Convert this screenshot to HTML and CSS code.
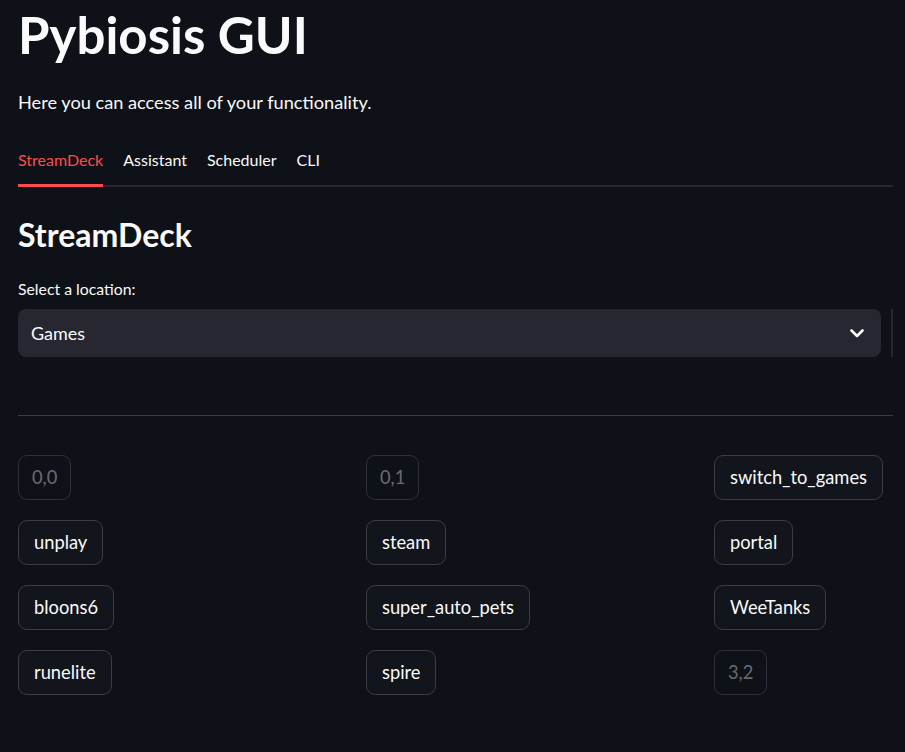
FILE: index.html
```html
<!DOCTYPE html>
<html>
<head>
<meta charset="utf-8">
<link rel="stylesheet" href="styles.css">
</head>
<body>
<div class="main">
  <h1 class="title">Pybiosis GUI</h1>
  <p class="intro">Here you can access all of your functionality.</p>
  <div class="tabs">
    <div class="tab active">StreamDeck</div>
    <div class="tab">Assistant</div>
    <div class="tab">Scheduler</div>
    <div class="tab">CLI</div>
  </div>
  <h2 class="section">StreamDeck</h2>
  <div class="label">Select a location:</div>
  <div class="select-row">
    <div class="select">
      <span class="select-value">Games</span>
      <svg class="chev" width="14" height="9" viewBox="0 0 14 9"><path d="M1.5 1.5 L7 7 L12.5 1.5" fill="none" stroke="#fafafa" stroke-width="2.6" stroke-linecap="round" stroke-linejoin="round"/></svg>
    </div>
    <div class="vbar"></div>
  </div>
  <hr class="divider">
  <div class="grid">
    <div class="cell"><button class="btn disabled">0,0</button></div>
    <div class="cell"><button class="btn disabled">0,1</button></div>
    <div class="cell"><button class="btn">switch_to_games</button></div>
    <div class="cell"><button class="btn">unplay</button></div>
    <div class="cell"><button class="btn">steam</button></div>
    <div class="cell"><button class="btn">portal</button></div>
    <div class="cell"><button class="btn">bloons6</button></div>
    <div class="cell"><button class="btn">super_auto_pets</button></div>
    <div class="cell"><button class="btn">WeeTanks</button></div>
    <div class="cell"><button class="btn">runelite</button></div>
    <div class="cell"><button class="btn">spire</button></div>
    <div class="cell"><button class="btn disabled">3,2</button></div>
  </div>
</div>
</body>
</html>
```

FILE: styles.css
```css
html, body {
  margin: 0;
  padding: 0;
  background: #0e1117;
  color: #fafafa;
  font-family: Lato, "Noto Sans", sans-serif;
  overflow: hidden;
}
.main {
  width: 875px;
  padding: 0 12px 0 18px;
}
.title {
  margin: 5px 0 0 0;
  font-size: 51px;
  line-height: 60px;
  font-weight: 700;
}
.intro {
  margin: 25px 0 0 0;
  font-size: 18.2px;
  line-height: 24px;
}
.tabs {
  display: flex;
  gap: 20px;
  margin-top: 26px;
  border-bottom: 2px solid #262730;
  height: 47px;
  box-sizing: border-box;
}
.tab {
  font-size: 16px;
  line-height: 24px;
  padding-top: 8px;
  height: 45px;
  box-sizing: border-box;
}
.tab.active {
  color: #ff4b4b;
  border-bottom: 3px solid #ff4b4b;
  margin-bottom: -2px;
  height: 47px;
}
.section {
  margin: 29px 0 0 0;
  font-size: 32px;
  line-height: 38px;
  font-weight: 700;
}
.label {
  margin-top: 25px;
  font-size: 15.8px;
  line-height: 20px;
}
.select-row {
  display: flex;
  align-items: stretch;
  margin-top: 10px;
}
.select {
  flex: 1;
  height: 48px;
  background: #262730;
  border-radius: 8px;
  display: flex;
  align-items: center;
  justify-content: space-between;
  padding: 0 17px 0 13px;
}
.select-value {
  font-size: 18px;
}
.vbar {
  width: 2px;
  margin-left: 10px;
  background: #262730;
}
.divider {
  margin: 58px 0 0 0;
  border: none;
  border-top: 1px solid #3b3d45;
  height: 0;
}
.grid {
  display: grid;
  grid-template-columns: 348px 348px 1fr;
  row-gap: 20px;
  margin-top: 39px;
}
.btn {
  font-family: Lato, "Noto Sans", sans-serif;
  font-size: 18.3px;
  line-height: 25px;
  padding: 9px 15px;
  border: 1px solid #3a3d46;
  border-radius: 9px;
  background: #12151c;
  color: #fafafa;
}
.btn.disabled {
  color: rgba(250, 250, 250, 0.4);
  border-color: #2e3139;
  background: #0e1117;
  padding: 9px 13px;
}
```
